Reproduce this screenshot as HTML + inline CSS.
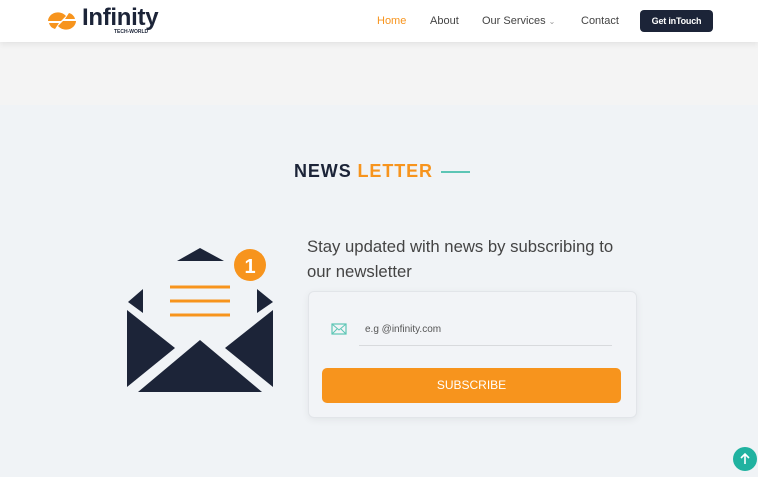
<!DOCTYPE html>
<html><head><style>
body{margin:0;width:758px;height:477px;overflow:hidden;background:#f0f3f6;font-family:"Liberation Sans",Arial,sans-serif;position:relative}
.nav{position:absolute;left:0;top:0;width:758px;height:42px;background:#fff;box-shadow:0 2px 6px rgba(0,0,0,.08);z-index:2}
.band{position:absolute;left:0;top:42px;width:758px;height:63px;background:#f4f4f4}
.nav a{position:absolute;top:15px;font-size:11px;color:#444;text-decoration:none}
.btn{position:absolute;left:640px;top:10px;width:73px;height:22px;background:#1c2438;border-radius:4px;color:#fff;font-size:9px;font-weight:bold;text-align:center;line-height:22px;letter-spacing:-.2px}
h2{position:absolute;left:294px;top:161px;margin:0;font-size:18px;font-weight:bold;color:#1c2438;letter-spacing:.9px}
h2 span{color:#f7941d}
.line{position:absolute;left:441px;top:171px;width:29px;height:2px;background:#5cc5b5}
.txt{position:absolute;left:307px;top:234px;font-size:16.7px;line-height:25px;color:#444;width:330px}
.card{position:absolute;left:308px;top:291px;width:327px;height:125px;background:#f2f4f7;border:1px solid #e2e5e9;border-radius:6px;box-shadow:0 2px 8px rgba(0,0,0,.06)}
.ph{position:absolute;left:365px;top:324px;font-size:10px;color:#555}
.ul{position:absolute;left:359px;top:345px;width:253px;height:1px;background:#d8dadd}
.sub{position:absolute;left:322px;top:368px;width:299px;height:35px;background:#f7941d;border-radius:5px;color:#fff;font-size:12px;text-align:center;line-height:35px}
.top{position:absolute;left:733px;top:447px;width:24px;height:24px;border-radius:50%;background:#20b2a0}
</style></head><body>
<div class="band"></div>
<div class="nav">
<svg style="position:absolute;left:46px;top:11px" width="32" height="20" viewBox="0 0 32 20"><path d="M2 10 A10 9 0 0 1 20 5 L15 10 Z" fill="#f7941d"/><path d="M30 10 A10 9 0 0 1 12 15 L17 10 Z" fill="#f7941d"/><path d="M3 12 L13 12 L9 18 A9 8 0 0 1 3 12Z" fill="#f7941d"/><path d="M29 8 L19 8 L23 2 A9 8 0 0 1 29 8Z" fill="#f7941d"/></svg>
<div style="position:absolute;left:82px;top:4px;font-size:24px;font-weight:bold;color:#1c2438;letter-spacing:-.3px">Infinity</div>
<div style="position:absolute;left:114px;top:29px;font-size:5px;font-weight:bold;color:#1c2438">TECH-WORLD</div>
<a style="left:377px;color:#f7941d">Home</a>
<a style="left:430px">About</a>
<a style="left:482px">Our Services <span style="font-size:8px;color:#999">&#8964;</span></a>
<a style="left:581px">Contact</a>
<div class="btn">Get inTouch</div>
</div>
<h2>NEWS <span>LETTER</span></h2><div class="line"></div>
<svg style="position:absolute;left:0;top:0" width="300" height="400">
<g fill="#1c2438">
<polygon points="200,248 177,261 224,261"/>
<polygon points="128,302 143,289 143,313"/>
<polygon points="257,289 273,302 257,313"/>
<polygon points="127,310 175,348 127,387"/>
<polygon points="273,310 225,348 273,387"/>
<polygon points="200,340 138,392 262,392"/>
</g>
<g stroke="#f7941d" stroke-width="3"><line x1="170" y1="287" x2="230" y2="287"/><line x1="170" y1="301" x2="230" y2="301"/><line x1="170" y1="315" x2="230" y2="315"/></g>
<circle cx="250" cy="265" r="16" fill="#f7941d"/>
<text x="250" y="273" font-size="20" font-weight="bold" fill="#fff" text-anchor="middle" font-family="Liberation Sans">1</text>
</svg>
<div class="txt">Stay updated with news by subscribing to our newsletter</div>
<div class="card"></div>
<svg style="position:absolute;left:331px;top:323px" width="16" height="12"><rect x="1" y="1" width="14" height="10" fill="none" stroke="#5cc5b5" stroke-width="1.2"/><path d="M1 1 L8 7 L15 1 M1 11 L6 6 M15 11 L10 6" fill="none" stroke="#5cc5b5" stroke-width="1"/></svg>
<div class="ph">e.g @infinity.com</div><div class="ul"></div>
<div class="sub">SUBSCRIBE</div>
<div class="top"><svg width="24" height="24"><path d="M12 17 V7 M8 11 L12 7 L16 11" stroke="#fff" stroke-width="1.6" fill="none"/></svg></div>
</body></html>
